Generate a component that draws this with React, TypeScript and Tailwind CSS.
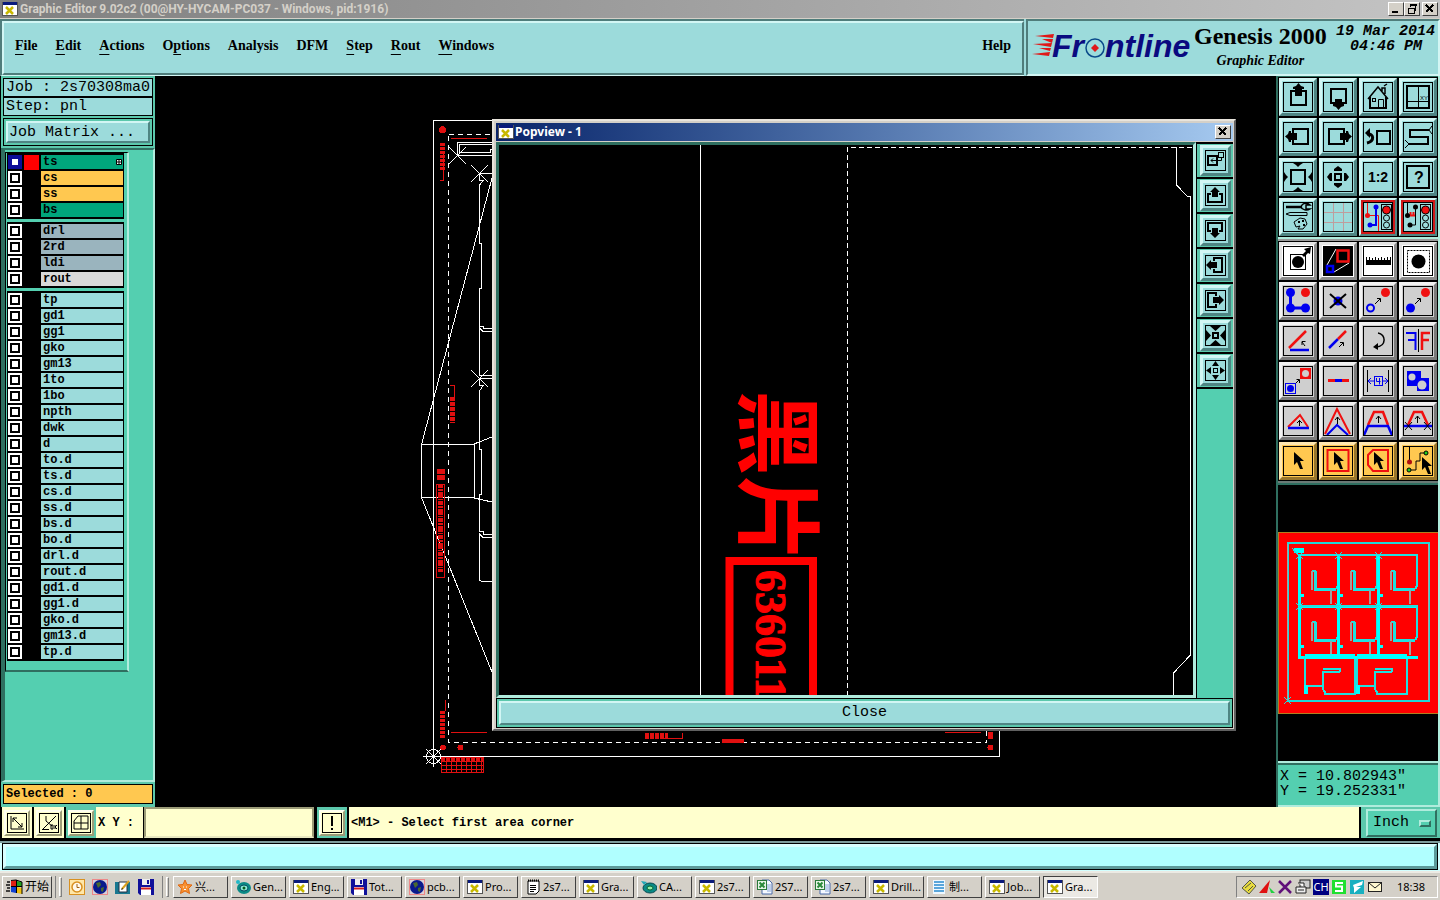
import type { ReactNode } from "react";
import clsx from "clsx";

const MONO = "font-['Liberation_Mono','DejaVu_Sans_Mono',monospace]";
const SERIF = "font-['Liberation_Serif',serif]";
const UI = "font-['Noto_Sans','Noto_Sans_CJK_SC',sans-serif]";

const raisedTeal =
  "bg-[#9cdbdb] border-t-[#d2f6f4] border-l-[#d2f6f4] border-b-[#4f8583] border-r-[#4f8583]";
const raisedGrey =
  "bg-[#cfcfcf] border-t-[#f2f2f2] border-l-[#f2f2f2] border-b-[#7b7b7b] border-r-[#7b7b7b]";
const raisedWhite =
  "bg-white border-t-[#e4e4e4] border-l-[#e4e4e4] border-b-[#8c8c8c] border-r-[#8c8c8c]";
const raisedOrange =
  "bg-[#ffc850] border-t-[#ffe7b0] border-l-[#ffe7b0] border-b-[#98762c] border-r-[#98762c]";
const raisedCream =
  "bg-[#ffffce] border-t-[#fffff0] border-l-[#fffff0] border-b-[#9c9c78] border-r-[#9c9c78]";
const raisedWin =
  "bg-[#d4d0c8] border-t-white border-l-white border-b-[#404040] border-r-[#404040]";

const menus = [
  { name: "File", key: 0 },
  { name: "Edit", key: 0 },
  { name: "Actions", key: 0 },
  { name: "Options", key: 1 },
  { name: "Analysis", key: -1 },
  { name: "DFM", key: -1 },
  { name: "Step", key: 0 },
  { name: "Rout", key: 0 },
  { name: "Windows", key: 0 },
];

const layerGroups = [
  [
    { name: "ts", tone: "bg-[#00a67c]", active: true },
    { name: "cs", tone: "bg-[#ffc850]" },
    { name: "ss", tone: "bg-[#ffc850]" },
    { name: "bs", tone: "bg-[#00a67c]" },
  ],
  [
    { name: "drl", tone: "bg-[#9ab4be]" },
    { name: "2rd", tone: "bg-[#9ab4be]" },
    { name: "ldi", tone: "bg-[#9ab4be]" },
    { name: "rout", tone: "bg-[#d9d9d9]" },
  ],
  [
    "tp", "gd1", "gg1", "gko", "gm13", "1to", "1bo", "npth", "dwk", "d", "to.d", "ts.d",
    "cs.d", "ss.d", "bs.d", "bo.d", "drl.d", "rout.d", "gd1.d", "gg1.d", "gko.d", "gm13.d", "tp.d",
  ].map((name) => ({ name, tone: "bg-[#9cdbdb]" })),
] as { name: string; tone: string; active?: boolean }[][];

/* ---------- tool icons, all on a 30x30 grid ---------- */

const cursor = "M0 0 V13 L3 10 L6 17 H9 L6 9 H10 Z";
const box = { fill: "none", stroke: "#000", strokeWidth: 2 };
const BLUE = "#0000f0";
const RED = "#f01010";

const Arrow = ({ d, color = "#000" }: { d: string; color?: string }) => (
  <path d={d} fill="none" stroke={color} strokeWidth={1} />
);

type Tool = { name: string; icon: ReactNode; framed?: boolean };

const viewTools: Tool[] = [
  {
    name: "Pan up",
    icon: (
      <>
        <rect x="8" y="9" width="15" height="14" {...box} />
        <path d="M15.5 1 L18 4 L21 5 V7 H19 V14 H12 V7 H10 V5 L13 4 Z" />
      </>
    ),
  },
  {
    name: "Pan down",
    icon: (
      <>
        <rect x="8" y="7" width="15" height="14" {...box} />
        <path d="M15.5 28 L18 25 L21 24 V22 H19 V17 H12 V22 H10 V24 L13 25 Z" />
      </>
    ),
  },
  {
    name: "Home",
    icon: (
      <g fill="none" stroke="#000">
        <path d="M5 17 L15 5 L25 17 M19 9 V6 H22 V12 M21 4 L24 2" strokeWidth="1.5" />
        <path d="M7 15 V26 H23 V15" strokeWidth="2" />
        <rect x="9.5" y="16.5" width="3" height="3" />
        <path d="M15.5 26 V17.5 H20.5 V26" />
      </g>
    ),
  },
  {
    name: "Window by coordinates",
    icon: (
      <>
        <rect x="4" y="4" width="22" height="22" {...box} />
        <path d="M15.5 4 V26 M4 19.5 H26" stroke="#000" />
        <text x="17" y="18" fontSize="6" fontFamily="Liberation Sans">XY</text>
      </>
    ),
  },
  {
    name: "Pan left",
    icon: (
      <>
        <rect x="10" y="7" width="15" height="15" {...box} />
        <path d="M2 14.5 L5 12 L6 9 H8 V11 H14 V18 H8 V20 H6 L5 17 Z" />
      </>
    ),
  },
  {
    name: "Pan right",
    icon: (
      <>
        <rect x="6" y="7" width="15" height="15" {...box} />
        <path d="M29 14.5 L26 12 L25 9 H23 V11 H17 V18 H23 V20 H25 L26 17 Z" />
      </>
    ),
  },
  {
    name: "Previous view",
    icon: (
      <>
        <rect x="14" y="9" width="13" height="13" {...box} />
        <path d="M4 12 C11 11 12 19 4 21" fill="none" stroke="#000" strokeWidth="3" />
        <path d="M2 11 L7 6 V16 Z" />
      </>
    ),
  },
  {
    name: "Snake",
    icon: (
      <>
        <path d="M26 8 H7 V15 H25 V22 H6" {...box} />
        <path d="M29 4 L26 8 L29 12 M2 18 L6 22 L2 26" fill="none" stroke="#000" />
      </>
    ),
  },
  {
    name: "Zoom out",
    icon: (
      <>
        <rect x="8" y="8" width="14" height="14" {...box} />
        <path d="M10 1 H20 L17 3 L15 5 L13 3 Z M10 29 H20 L17 27 L15 25 L13 27 Z M1 10 V20 L3 17 L5 15 L3 13 Z M29 10 V20 L27 17 L25 15 L27 13 Z" />
      </>
    ),
  },
  {
    name: "Zoom in",
    icon: (
      <>
        <rect x="12" y="12" width="6" height="6" {...box} />
        <path d="M15 4 L19 7 V9 H11 V7 Z M15 26 L19 23 V21 H11 V23 Z M4 15 L7 11 H9 V19 H7 Z M26 15 L23 11 H21 V19 H23 Z" />
      </>
    ),
  },
  {
    name: "Scale 1:2",
    icon: (
      <text x="15" y="20" fontSize="14" fontWeight="bold" textAnchor="middle" fontFamily="Liberation Sans">
        1:2
      </text>
    ),
  },
  {
    name: "Help",
    icon: (
      <>
        <rect x="4" y="4" width="22" height="22" {...box} />
        <text x="16" y="21" fontSize="16" fontWeight="bold" textAnchor="middle" fontFamily="Liberation Sans">
          ?
        </text>
      </>
    ),
  },
  {
    name: "Setup",
    icon: (
      <>
        <path d="M3 5 H19" stroke="#000" strokeWidth="2.5" />
        <path d="M27 3 C24 0 19 1 18 5 C19 8 24 9 27 7 H23 V3 Z" fill="none" stroke="#000" strokeWidth="1.5" />
        <path d="M3 12 L7 10.5 H24 V13.5 H7 Z" fill="none" stroke="#000" />
        <path d="M11 20 L17 16 L22 17 L24 22 L20 27 L15 27 L17 24 L13 25 Z" fill="none" stroke="#000" />
        <path d="M15 20 h2 M19 19 h2 M20 23 h2" stroke="#000" strokeWidth="2" />
      </>
    ),
  },
  { name: "Grid", icon: <path d="M10.5 1 V29 M20.5 1 V29 M1 10.5 H29 M1 20.5 H29" stroke="#c09c9c" /> },
  {
    name: "Online check",
    framed: true,
    icon: (
      <>
        <path d="M4.5 1 V13.5 H15.5 V29" fill="none" stroke={RED} />
        <path d="M13 5 V23 H7" fill="none" stroke={BLUE} strokeWidth="2" />
        <circle cx="13" cy="5" r="2.5" fill={BLUE} />
        <circle cx="7" cy="23" r="2.5" fill={BLUE} />
        <circle cx="4.5" cy="13.5" r="2.5" fill={RED} />
        <rect x="18.5" y="2.5" width="10" height="25" fill="none" stroke="#000" />
        <circle cx="23.5" cy="8" r="4" fill={RED} stroke="#000" />
        <circle cx="23.5" cy="16" r="3" fill="none" stroke="#000" />
        <circle cx="23.5" cy="23" r="3" fill="none" stroke="#000" />
      </>
    ),
  },
  {
    name: "Net check",
    framed: true,
    icon: (
      <>
        <path d="M4.5 1 V13.5 M12.5 5 V23 H7" fill="none" stroke="#000" />
        <path d="M5 13.5 H12 M7.5 13 V10 M10.5 13 V10" stroke={RED} strokeWidth="2" />
        <circle cx="12.5" cy="5" r="2.5" />
        <circle cx="7" cy="23" r="2.5" />
        <circle cx="4.5" cy="13.5" r="2.5" />
        <rect x="17.5" y="2.5" width="10" height="25" fill="none" stroke="#000" />
        <circle cx="22.5" cy="8" r="4" fill={RED} stroke="#000" />
        <circle cx="22.5" cy="16" r="3" fill="none" stroke="#000" />
        <circle cx="22.5" cy="23" r="3" fill="none" stroke="#000" />
      </>
    ),
  },
];

const modeTools: Tool[] = [
  {
    name: "Feature select",
    icon: (
      <>
        <rect x="7.5" y="8.5" width="15" height="15" fill="none" stroke="#000" />
        <circle cx="15" cy="16" r="6" />
        <path d="M19 9 L23 5 L21 3 L28 1 L27 8 L25 7 L21 11 Z" />
      </>
    ),
  },
  {
    name: "Popview",
    icon: (
      <>
        <rect x="1" y="1" width="28" height="28" fill="#000" />
        <path d="M4 19 L13 3 M11 26 L26 17" stroke="#fff" />
        <rect x="14.5" y="4.5" width="11" height="11" fill="none" stroke={RED} strokeWidth="2.5" />
        <rect x="4" y="20" width="6" height="6" fill="none" stroke={BLUE} strokeWidth="2.5" />
      </>
    ),
  },
  {
    name: "Measure",
    icon: (
      <>
        <rect x="3" y="14" width="25" height="5" />
        <path d="M3.5 11 V14 M6.5 11 V14 M9.5 12 V14 M12.5 11 V14 M15.5 12 V14 M18.5 11 V14 M21.5 12 V14 M24.5 11 V14 M27.5 11 V14" stroke="#000" />
      </>
    ),
  },
  {
    name: "Area select",
    icon: (
      <>
        <rect x="4.5" y="4.5" width="22" height="22" fill="none" stroke="#000" strokeDasharray="2 1" />
        <circle cx="15.5" cy="15.5" r="7" />
      </>
    ),
  },
];

const editTools: Tool[] = [
  {
    name: "Connect pads",
    icon: (
      <>
        <path d="M7.5 6.5 V22 H22" fill="none" stroke={BLUE} strokeWidth="3" />
        <circle cx="7.5" cy="6.5" r="4.5" fill={BLUE} />
        <circle cx="7.5" cy="22" r="4.5" fill={BLUE} />
        <circle cx="22.5" cy="22" r="4.5" fill={BLUE} />
        <circle cx="22.5" cy="6.5" r="4.5" fill={RED} />
      </>
    ),
  },
  {
    name: "Delete",
    icon: (
      <>
        <circle cx="15" cy="15" r="4.5" fill={BLUE} />
        <path d="M7 8 L23 22 M23 8 L7 22" stroke="#000" strokeWidth="2" />
      </>
    ),
  },
  {
    name: "Copy",
    icon: (
      <>
        <circle cx="22.5" cy="6.5" r="4.5" fill={RED} />
        <circle cx="7.5" cy="22" r="3.5" fill="none" stroke={BLUE} strokeWidth="2" />
        <Arrow d="M12 18 L17 13 M14 12.5 H17.5 V16" />
      </>
    ),
  },
  {
    name: "Move",
    icon: (
      <>
        <circle cx="22.5" cy="6.5" r="4.5" fill={RED} />
        <circle cx="7.5" cy="22" r="4.5" fill={BLUE} />
        <Arrow d="M12 18 L17 13 M14 12.5 H17.5 V16" />
      </>
    ),
  },
  {
    name: "Rotate line",
    icon: (
      <>
        <path d="M6 22 L23 5" stroke={RED} strokeWidth="2.5" />
        <path d="M7 24 H26" stroke={BLUE} strokeWidth="2.5" />
        <Arrow d="M22 20 L19 16 M19 19 V15.5 H22.5" />
      </>
    ),
  },
  {
    name: "Stretch line",
    icon: (
      <>
        <path d="M6 22 L15 13" stroke={BLUE} strokeWidth="2.5" />
        <path d="M15 13 L23 5" stroke={RED} strokeWidth="2.5" />
        <Arrow d="M16 21 L20 17 M17 16.5 H20.5 V20" />
      </>
    ),
  },
  {
    name: "Rotate",
    icon: (
      <>
        <path d="M15 7 C23 8 24 20 13 21" fill="none" stroke="#000" strokeWidth="1.5" />
        <path d="M10 21 L15 17 V24 Z" />
      </>
    ),
  },
  {
    name: "Mirror",
    icon: (
      <>
        <path d="M3 7 H12.5 V24 M5 14 H12" fill="none" stroke={BLUE} strokeWidth="2" />
        <path d="M15.5 3 V26" stroke="#000" />
        <path d="M19 24 V7 H27 M19 14 H26" fill="none" stroke={RED} strokeWidth="2.5" />
      </>
    ),
  },
  {
    name: "Change symbol",
    icon: (
      <>
        <rect x="2.5" y="17.5" width="10" height="10" fill="none" stroke={BLUE} />
        <circle cx="7.5" cy="22.5" r="3.5" fill={BLUE} />
        <rect x="17" y="2" width="11" height="11" fill={RED} />
        <circle cx="22.5" cy="7.5" r="3.5" fill="#cfcfcf" />
        <Arrow d="M13 17 L16 14 M13.5 13.5 H16.5 V17" />
      </>
    ),
  },
  {
    name: "Break line",
    icon: (
      <>
        <path d="M5 14.5 H26" stroke={RED} strokeWidth="3" />
        <path d="M12 14.5 H19" stroke={BLUE} strokeWidth="3" />
      </>
    ),
  },
  {
    name: "Spacing",
    icon: (
      <>
        <path d="M4.5 4 V26 M25.5 4 V26" stroke="#000" />
        <path d="M5 15 H11 M19 15 H25 M8 12 L5 15 L8 18 M22 12 L25 15 L22 18" fill="none" stroke={BLUE} />
        <rect x="11.5" y="10.5" width="8" height="9" fill="none" stroke={BLUE} />
        <path d="M13.5 12 V15.5 H17.5 M16.5 12 V18.5" fill="none" stroke={BLUE} />
      </>
    ),
  },
  {
    name: "Contourize",
    icon: (
      <>
        <path d="M4 5 H18 V12 H26 V25 H14 V20 H4 Z" fill={BLUE} />
        <circle cx="9" cy="11" r="3.5" fill="#cfcfcf" />
        <circle cx="19" cy="19" r="4.5" fill="#cfcfcf" />
      </>
    ),
  },
  {
    name: "Move triangle",
    icon: (
      <>
        <path d="M5 21 L17 9 L25 21" fill="none" stroke={RED} strokeWidth="2" />
        <path d="M5 22 H26" stroke={BLUE} strokeWidth="2.5" />
        <Arrow d="M16.5 20 V14 M14 17 L16.5 14.5 L19 17" />
      </>
    ),
  },
  {
    name: "Move corner",
    icon: (
      <>
        <path d="M2 28 L14 3 L27 28" fill="none" stroke={RED} strokeWidth="2" />
        <path d="M4 29 L14 19 L25 29" fill="none" stroke={BLUE} strokeWidth="2" />
        <Arrow d="M14.5 18 V11 M12 14 L14.5 11 L17 14" />
      </>
    ),
  },
  {
    name: "Move trapezoid",
    icon: (
      <>
        <path d="M5 19 L11 6 H20 L25 19" fill="none" stroke={RED} strokeWidth="2.5" />
        <path d="M1 29 L5 20 H25 L29 29" fill="none" stroke={BLUE} strokeWidth="2.5" />
        <Arrow d="M15.5 17 V10 M13 13 L15.5 10 L18 13" />
      </>
    ),
  },
  {
    name: "Move segment",
    icon: (
      <>
        <path d="M5 19 L11 6 H19 L25 19" fill="none" stroke={RED} strokeWidth="2.5" />
        <path d="M1 20 H29" stroke={BLUE} strokeWidth="2.5" />
        <Arrow d="M14.5 17 V10 M12 13 L14.5 10 L17 13 M2 16 L9 24 M9 16 L2 24 M21 16 L28 24 M28 16 L21 24" />
      </>
    ),
  },
];

const selectTools: Tool[] = [
  { name: "Select single", icon: <path d={cursor} transform="translate(11 6)" /> },
  {
    name: "Select by frame",
    icon: (
      <>
        <rect x="4.5" y="4" width="21" height="21" fill="none" stroke={RED} strokeWidth="2" />
        <path d={cursor} transform="translate(11 6)" />
      </>
    ),
  },
  {
    name: "Select by polygon",
    icon: (
      <>
        <path d="M10 4 H25 V25 H10 L5 19 V9 Z" fill="none" stroke={RED} strokeWidth="2" />
        <path d={cursor} transform="translate(11 6)" />
      </>
    ),
  },
  {
    name: "Select net",
    icon: (
      <>
        <path d="M6.5 1 V16 M6 24 H13 V15 H17 V7 H23" fill="none" stroke="#000" />
        <circle cx="6.5" cy="16" r="2.5" fill="#b01010" />
        <circle cx="6" cy="24" r="2" fill="#20d020" stroke="#000" />
        <circle cx="23" cy="7" r="2" fill="#20d020" stroke="#000" />
        <path d={cursor} transform="translate(19 11)" />
      </>
    ),
  },
];

function ToolButton({ tool, skin }: { tool: Tool; skin: string }) {
  return (
    <button
      type="button"
      aria-label={tool.name}
      className={clsx(
        "flex h-[38px] w-[38px] items-center justify-center",
        tool.framed ? "border-2" : "border-[3px]",
        skin
      )}
    >
      <span className={clsx("flex", tool.framed && "bg-[#d01818] p-[2px]")}>
        <svg width="30" height="30" viewBox="0 0 30 30" className={tool.framed ? "bg-[#9cdbdb]" : ""}>
          {tool.icon}
          <rect x="0.5" y="0.5" width="29" height="29" fill="none" stroke="#000" />
        </svg>
      </span>
    </button>
  );
}

/* ---------- popup side buttons, 21x21 grid ---------- */

const popTools: Tool[] = [
  {
    name: "Duplicate view",
    icon: (
      <g fill="none" stroke="#000">
        <rect x="3" y="6" width="9" height="9" strokeWidth="2" />
        <rect x="13.5" y="2.5" width="5" height="5" />
        <path d="M16.5 8 V10.5 H6 M8 8.5 L6 10.5 L8 12.5" />
      </g>
    ),
  },
  {
    name: "Popup pan up",
    icon: (
      <>
        <path d="M6 9 H3 V17 H17 V9 H14" {...box} />
        <path d="M10 2 L15 7 H13 V12 H7 V7 H5 Z" />
      </>
    ),
  },
  {
    name: "Popup pan down",
    icon: (
      <>
        <path d="M6 11 H3 V3 H17 V11 H14" {...box} />
        <path d="M10 18 L15 13 H13 V8 H7 V13 H5 Z" />
      </>
    ),
  },
  {
    name: "Popup pan left",
    icon: (
      <>
        <path d="M9 6 V3 H17 V17 H9 V14" {...box} />
        <path d="M1 10 L6 5 V7 H12 V13 H6 V15 Z" />
      </>
    ),
  },
  {
    name: "Popup pan right",
    icon: (
      <>
        <path d="M11 6 V3 H3 V17 H11 V14" {...box} />
        <path d="M19 10 L14 5 V7 H8 V13 H14 V15 Z" />
      </>
    ),
  },
  {
    name: "Popup zoom out",
    icon: (
      <>
        <rect x="8" y="8" width="5" height="5" {...box} />
        <path d="M5 1 H16 L10.5 6 Z M5 20 H16 L10.5 15 Z M1 5 V16 L6 10.5 Z M20 5 V16 L15 10.5 Z" />
      </>
    ),
  },
  {
    name: "Popup zoom in",
    icon: (
      <>
        <rect x="8.5" y="8.5" width="4" height="4" fill="none" stroke="#000" />
        <path d="M10.5 1 L14 6 H7 Z M10.5 20 L14 15 H7 Z M1 10.5 L6 7 V14 Z M20 10.5 L15 7 V14 Z" />
      </>
    ),
  },
];

/* ---------- small window / taskbar icons, 16x16 grid ---------- */

const XIcon = () => (
  <svg width="16" height="16" viewBox="0 0 16 16" className="shrink-0">
    <rect x="0.5" y="1.5" width="15" height="13" fill="#fff" stroke="#555" />
    <rect x="1" y="1" width="14" height="3" fill="#0a1a7c" />
    <path d="M4 6 L11 13 M11 6 L4 13" stroke="#c8b800" strokeWidth="2.5" />
  </svg>
);

const FloppyIcon = () => (
  <svg width="16" height="16" viewBox="0 0 16 16" className="shrink-0">
    <path d="M0 0 H16 V16 H2 L0 14 Z" fill="#10109a" />
    <rect x="4" y="0" width="8" height="6" fill="#eee" />
    <rect x="9" y="1" width="2" height="4" fill="#10109a" />
    <rect x="3" y="8" width="10" height="8" fill="#fff" />
    <path d="M3 9.5 H13" stroke="#d02020" strokeWidth="2" />
  </svg>
);

const GlobeIcon = () => (
  <svg width="16" height="16" viewBox="0 0 16 16" className="shrink-0">
    <rect x="0.5" y="0.5" width="15" height="15" fill="#d8d0d8" stroke="#e88" />
    <circle cx="8" cy="8" r="7" fill="#0a1a8c" />
    <path d="M4 4 L8 3 L9 6 L6 9 Z M9 9 L12 8 L11 13 L9 12 Z" fill="#4a6a30" />
  </svg>
);

const ExcelIcon = () => (
  <svg width="16" height="16" viewBox="0 0 16 16" className="shrink-0">
    <path d="M5 1 H12 L15 4 V15 H5 Z" fill="#f4f8ff" stroke="#4a6aa8" />
    <path d="M10 6 h4 M10 8 h4 M10 10 h4 M10 12 h4" stroke="#8aa8d8" />
    <rect x="0.5" y="1.5" width="9" height="9" fill="#e8f6e8" stroke="#2a7a3a" />
    <path d="M2.5 3.5 L7.5 8.5 M7.5 3.5 L2.5 8.5" stroke="#2a8a3a" strokeWidth="2" />
  </svg>
);

const GenesisIcon = () => (
  <svg width="16" height="16" viewBox="0 0 16 16" className="shrink-0">
    <ellipse cx="9" cy="9" rx="7" ry="6" fill="#0a8a86" />
    <ellipse cx="9" cy="9" rx="4" ry="3" fill="#8ef0d8" stroke="#064a60" />
    <circle cx="9" cy="9" r="1.5" fill="#0a5a20" />
    <circle cx="3" cy="3" r="2" fill="#20b8c8" />
  </svg>
);

const EyeIcon = () => (
  <svg width="16" height="16" viewBox="0 0 16 16" className="shrink-0">
    <ellipse cx="9" cy="9" rx="7" ry="5" fill="#0a8a86" stroke="#064a50" />
    <ellipse cx="9" cy="9" rx="3" ry="2" fill="#8ef0a8" stroke="#046030" />
    <path d="M0 2 L6 3 L3 6 Z" fill="#20a8b8" />
  </svg>
);

const StarIcon = () => (
  <svg width="16" height="16" viewBox="0 0 16 16" className="shrink-0">
    <path
      d="M8 1 L10 5.5 L15 6 L11.5 9.5 L12.5 14.5 L8 12 L3.5 14.5 L4.5 9.5 L1 6 L6 5.5 Z"
      fill="#f89030"
      stroke="#e06810"
    />
    <path d="M6 8 h1 M9 8 h1 M7 10.5 h2" stroke="#fff" />
  </svg>
);

const NoteIcon = () => (
  <svg width="16" height="16" viewBox="0 0 16 16" className="shrink-0">
    <path d="M3 2 H14 V12 L11 15 H3 Z" fill="#fff" stroke="#000" />
    <path d="M3 1.5 H14" stroke="#000" strokeWidth="2" strokeDasharray="1 1" />
    <path d="M5 6.5 h6 M5 8.5 h6 M5 10.5 h6 M5 12.5 h4" stroke="#000" />
  </svg>
);

const DocIcon = () => (
  <svg width="16" height="16" viewBox="0 0 16 16" className="shrink-0">
    <rect x="2" y="1" width="12" height="14" fill="#eef8ff" />
    <path d="M3 3 h10 M3 6 h10 M3 9 h10 M3 12 h10" stroke="#2a8ad0" strokeWidth="1.5" />
  </svg>
);

const ClockIcon = () => (
  <svg width="16" height="16" viewBox="0 0 16 16" className="shrink-0">
    <rect x="0.5" y="0.5" width="15" height="15" fill="#ffe7a8" stroke="#d89020" />
    <circle cx="8" cy="8" r="5" fill="#fff8e8" stroke="#d89020" strokeWidth="1.5" />
    <path d="M8 5 V8.5 H10.5" fill="none" stroke="#a06010" />
  </svg>
);

const DesktopIcon = () => (
  <svg width="16" height="16" viewBox="0 0 16 16" className="shrink-0">
    <rect x="0" y="3" width="15" height="12" fill="#187890" />
    <path d="M4 3 H12 V13 H4 Z" fill="#fff" stroke="#234" />
    <path d="M7 10 L14 2" stroke="#d8a020" strokeWidth="2" />
    <path d="M6 11 L8 10 L7 9 Z" />
  </svg>
);

const tasks: { label: string; icon: () => ReactNode; active?: boolean }[] = [
  { label: "兴...", icon: StarIcon },
  { label: "Gen...", icon: GenesisIcon },
  { label: "Eng...", icon: XIcon },
  { label: "Tot...", icon: FloppyIcon },
  { label: "pcb...", icon: GlobeIcon },
  { label: "Pro...", icon: XIcon },
  { label: "2s7...", icon: NoteIcon },
  { label: "Gra...", icon: XIcon },
  { label: "CA...", icon: EyeIcon },
  { label: "2s7...", icon: XIcon },
  { label: "2S7...", icon: ExcelIcon },
  { label: "2s7...", icon: ExcelIcon },
  { label: "Drill...", icon: XIcon },
  { label: "制...", icon: DocIcon },
  { label: "Job...", icon: XIcon },
  { label: "Gra...", icon: XIcon, active: true },
];

function WinButton({ name, children }: { name: string; children: ReactNode }) {
  return (
    <button type="button" aria-label={name} className={clsx("h-[14px] w-[16px] border", raisedWin)}>
      <svg width="14" height="12" viewBox="0 0 14 12" shapeRendering="crispEdges">
        {children}
      </svg>
    </button>
  );
}

function TitleBar() {
  return (
    <div className="flex h-[19px] shrink-0 items-center border-b border-[#d4d0c8] bg-linear-to-r from-[#808080] to-[#c4c4c4] px-[2px]">
      <XIcon />
      <h1 className="ml-[2px] font-['Roboto',sans-serif] text-[12px] leading-[16px] font-bold text-[#d4d0c8]">
        Graphic Editor 9.02c2 (00@HY-HYCAM-PC037 - Windows, pid:1916)
      </h1>
      <div className="ml-auto flex">
        <WinButton name="Minimize">
          <path d="M3 9 H9" stroke="#000" strokeWidth="2" />
        </WinButton>
        <WinButton name="Restore">
          <path d="M5 1 H11 V2 H5 Z M5 1 V4 M10.5 1 V7 H9" fill="none" stroke="#000" />
          <rect x="3" y="5" width="6" height="5" fill="none" stroke="#000" />
        </WinButton>
        <span className="w-[2px]" />
        <WinButton name="Close window">
          <path d="M3 2 L10 9 M10 2 L3 9" stroke="#000" strokeWidth="1.5" />
        </WinButton>
      </div>
    </div>
  );
}

function Logo() {
  return (
    <svg width="162" height="46" viewBox="0 -8 162 46" role="img" aria-label="Frontline" className="shrink-0 overflow-visible">
      <path d="M3 4 L22 2 L21 6 Z M10 7 L21 7 L20 11 Z M1 12 L20 11 L19 15 Z M7 16 L19 16 L18 19 Z M0 22 L18 20 L17 24 Z" fill="#e01818" />
      <g
        fill="#0a0a80"
        fontFamily="Liberation Sans"
        fontSize="32"
        fontWeight="bold"
        fontStyle="italic"
      >
        <text x="20" y="25">Fr</text>
        <text x="73" y="25">ntline</text>
      </g>
      <circle cx="63" cy="16" r="9" fill="none" stroke="#0a4a8a" strokeWidth="1.5" />
      <path d="M63 12 L67 16 L63 20 L59 16 Z" fill="#e01818" />
    </svg>
  );
}

function Header() {
  return (
    <header className={clsx(SERIF, "flex h-[57px] shrink-0 bg-[#9cdbdb] text-black")}>
      <div className="flex flex-1 border-t-2 border-b border-l-2 border-t-[#4f7d7b] border-b-[#d2f6f4] border-l-[#4f7d7b]">
        <nav className="flex flex-1 items-center gap-[18px] border-2 border-t-[#d2f6f4] border-r-[#4f7d7b] border-b-[#4f7d7b] border-l-[#d2f6f4] px-[11px] pb-[4px] text-[14px] leading-[18px] font-bold">
          {menus.map(({ name, key }) => (
            <button key={name} type="button">
              {key < 0 ? (
                name
              ) : (
                <>
                  {name.slice(0, key)}
                  <span className="underline underline-offset-4">{name[key]}</span>
                  {name.slice(key + 1)}
                </>
              )}
            </button>
          ))}
          <button type="button" className="ml-auto">
            Help
          </button>
        </nav>
      </div>
      <div className="ml-[2px] flex w-[414px] border-2 border-t-[#4f7d7b] border-r-[#d2f6f4] border-b-[#d2f6f4] border-l-[#4f7d7b] pl-[4px]">
        <div className="pt-[3px]">
          <Logo />
        </div>
        <div className="flex flex-col items-center">
          <span className="text-[24px] leading-[30px] font-bold whitespace-nowrap">Genesis 2000</span>
          <span className="text-[14px] leading-[20px] font-bold italic">Graphic Editor</span>
        </div>
        <div className={clsx(MONO, "flex-1 pt-[3px] pr-[3px] text-right text-[15px] leading-[15px] font-bold whitespace-nowrap italic")}>
          <p>19 Mar 2014</p>
          <p className="pr-[13px]">04:46 PM</p>
        </div>
      </div>
    </header>
  );
}

function LayerPanel() {
  return (
    <aside className={clsx(MONO, "flex w-[155px] shrink-0 flex-col border-l border-l-black bg-[#5cc8ac] text-black")}>
      <div className="flex flex-col gap-[2px] px-[2px] pt-[2px] pb-[2px]">
        <div className="border border-black bg-[#9cdbdb] text-[15px] whitespace-nowrap">
          <p className="h-[19px] border-b-2 border-black pl-[2px] leading-[17px]">Job : 2s70308ma0</p>
          <p className="h-[17px] pl-[2px] leading-[17px]">Step: pnl</p>
        </div>
        <div className="border border-black p-[2px]">
          <button
            type="button"
            className={clsx("block h-[22px] w-full border-2 text-left text-[15px] leading-[17px]", raisedTeal)}
          >
            <span className="pl-px">Job Matrix ...</span>
          </button>
        </div>
      </div>
      <div className="min-h-0 flex-1 border-t-2 border-r-2 border-b-2 border-l-4 border-t-[#2f6f60] border-r-[#b0ecdd] border-b-[#b0ecdd] border-l-[#2f6f60] bg-[#54cfb0] pt-[2px]">
        <div className="flex w-[124px] border-t border-r-2 border-b-2 border-l border-t-black border-r-[#b0ecdd] border-b-[#2f6f60] border-l-black pb-[9px]">
          <div className="flex flex-1 flex-col gap-[3px] pr-[3px] pl-px">
            {layerGroups.map((group, g) => (
              <ul key={g} className="border-t border-black bg-black pb-px">
                {group.map((layer) => (
                  <li key={layer.name}>
                    <label className="flex h-[16px] items-center gap-[2px] px-px text-[12px] leading-[14px] font-bold">
                      <input
                        type="checkbox"
                        defaultChecked={layer.active}
                        className={clsx(
                          "size-[14px] shrink-0 appearance-none bg-white",
                          layer.active
                            ? "border-4 border-[#0c0c98]"
                            : "border-2 border-white shadow-[inset_0_0_0_2px_#000]"
                        )}
                      />
                      <span className={clsx("size-[15px] shrink-0", layer.active && "bg-[#ff0000]")} />
                      <span className={clsx("flex h-[14px] flex-1 items-center justify-between pl-[2px]", layer.tone)}>
                        {layer.name}
                        {layer.active && (
                          <svg width="6" height="6" viewBox="0 0 6 6" className="mr-px">
                            <path d="M0.5 0.5 H5.5 V5.5 H0.5 Z M3 0 V6 M0 3 H6" fill="#fff" stroke="#000" />
                          </svg>
                        )}
                      </span>
                    </label>
                  </li>
                ))}
              </ul>
            ))}
          </div>
        </div>
      </div>
      <div className="px-[2px] pt-[2px] pb-[3px]">
        <p className="h-[20px] border border-black bg-[#ffc850] pl-[2px] text-[12px] leading-[18px] font-bold">
          Selected : 0
        </p>
      </div>
    </aside>
  );
}

/* Panel outline behind the popup */
function PanelDrawing() {
  return (
    <svg className="absolute inset-0 h-full w-full" shapeRendering="crispEdges">
      <g transform="translate(-155 -76)" fill="none" stroke="#fff">
        <rect x="433.5" y="120.5" width="566" height="636" />
        <rect x="448.5" y="134.5" width="538" height="608" strokeDasharray="5 4" />
        <path d="M492 178 L421.5 444.5 V497.5 L492 672 M421.5 444.5 H474.5 V497.5 H421.5 M474 444 L492 437 M474 498 L492 502" />
        <path d="M500 142.5 H457.5 V155.5 H500 M500 144.5 H459.5 V152.5 H490 V149 H500" />
        <path d="M449 147 L466 164 M466 147 L449 164" />
        <path d="M471 165 L488 182 M488 165 L471 182 M471 370 L488 387 M488 370 L471 387" />
        <path d="M500 173.5 H479.5 V180 H483.5 L479.5 185 V243 H481.5 V288 H479.5 V326 H483.5 V328.5 H500 M500 331.5 H483 L479.5 328 V375.5 H500 M500 378.5 H479.5 V385 H483.5 L479.5 391 V449 H481.5 V494 H479.5 V531 H483.5 V534.5 H500 M500 537.5 H483 L479.5 534 V580 L482 581.5 H500" />
        <circle cx="433.5" cy="756.5" r="7" />
        <path d="M423 756.5 H444 M433.5 746 V767 M426 749 L441 764 M441 749 L426 764" />
        <g stroke="#e01010">
          <path d="M451 138.5 H487 M451 732.5 H487 M945 732.5 H981" />
          <path d="M443.5 154 V180.5 H440 M445.5 700 V711 M450 385.5 H454.5 V397 M663 738.5 H682.5 V733" />
          <path d="M442.5 143 V170 M442.5 711 V738" strokeWidth="5" strokeDasharray="3 1" />
          <path d="M452.5 397 V423" strokeWidth="5" strokeDasharray="4 1" />
          <path d="M441 469 V480" strokeWidth="8" strokeDasharray="5 1" />
          <path d="M440.5 484 V572" strokeWidth="5" strokeDasharray="4 1 2 1 6 1 1 1" />
          <rect x="436.5" y="484.5" width="8" height="93" />
          <path d="M645 736 H668" strokeWidth="6" strokeDasharray="4 1" />
          <path d="M722 740.5 H744" strokeWidth="4" />
          <path d="M990 732 V739" strokeWidth="5" />
          <path d="M441.5 757.5 H483 V772 H441.5 Z M441 761.5 H483 M441 765.5 H483 M441 769.5 H483" />
          <path d="M441 760 H483" strokeWidth="4" strokeDasharray="4 1" />
          <path d="M441 765 H483" strokeWidth="15" strokeDasharray="1 4" />
        </g>
        <g fill="#e01010" stroke="none">
          <circle cx="442.5" cy="129.5" r="3.5" />
          <circle cx="443" cy="747.5" r="3" />
          <circle cx="460.5" cy="747.5" r="3" />
          <circle cx="990.5" cy="747.5" r="3" />
        </g>
      </g>
    </svg>
  );
}

function PopDrawing() {
  return (
    <svg className="block h-full w-full" role="img" aria-label="Zoomed artwork">
      <g fill="none" stroke="#fff" shapeRendering="crispEdges">
        <path d="M201.5 0 V551" />
        <path d="M348.5 551 V2.5 H694" strokeDasharray="5 3" />
        <path d="M677.5 2 V40 L688 51 H691.5 V510 L674.5 528 V551" />
      </g>
      <path d="M230.5 551 V416 H314 V551" fill="none" stroke="#ff0000" strokeWidth="8" />
      <g fill="#ff0000" fontWeight="bold">
        <text transform="translate(247 245) rotate(90)" fontSize="86" fontFamily="Noto Sans CJK SC">
          黑片
        </text>
        <text
          transform="translate(257 425) rotate(90)"
          fontSize="44"
          fontFamily="Liberation Serif"
          stroke="#ff0000"
        >
          636011
        </text>
      </g>
    </svg>
  );
}

function Popview() {
  return (
    <section
      aria-label="Popview - 1"
      className="absolute top-[43px] left-[337px] flex h-[612px] w-[744px] flex-col border-2 border-t-[#e8e4dc] border-r-[#606060] border-b-[#606060] border-l-[#e8e4dc] bg-[#d4d0c8] pt-[2px] pr-px pb-px pl-[2px]"
    >
      <div className="flex h-[18px] shrink-0 items-center bg-linear-to-r from-[#0a246a] to-[#a6caf0] pr-[2px] pl-[2px]">
        <XIcon />
        <h2 className={clsx(UI, "ml-px text-[12px] leading-[16px] font-bold text-white")}>Popview - 1</h2>
        <div className="ml-auto flex">
          <WinButton name="Close popview">
            <path d="M3 2 L10 9 M10 2 L3 9" stroke="#000" strokeWidth="1.5" />
          </WinButton>
        </div>
      </div>
      <div className="mt-px flex min-h-0 flex-1">
        <div className="min-w-0 flex-1 border-[3px] border-t-[#2f6f60] border-r-[#b0ecdd] border-b-[#b0ecdd] border-l-[#2f6f60] bg-black">
          <PopDrawing />
        </div>
        <div className="flex w-[37px] flex-col border-t-2 border-l border-black bg-[#54cfb0]">
          {popTools.map((t) => (
            <div key={t.name} className="h-[35px] border-b-2 border-black bg-[#5cc8ac] px-[2px] pt-px">
              <button
                type="button"
                aria-label={t.name}
                className={clsx("mx-auto flex size-[31px] items-center justify-center border-[3px]", raisedTeal)}
              >
                <svg width="21" height="21" viewBox="0 0 21 21">
                  {t.icon}
                  <rect x="0.5" y="0.5" width="20" height="20" fill="none" stroke="#000" />
                </svg>
              </button>
            </div>
          ))}
        </div>
      </div>
      <div className="shrink-0 border border-black bg-[#5cc8ac] p-[2px]">
        <button
          type="button"
          className={clsx(MONO, "block h-[24px] w-full border-2 text-center text-[15px] leading-[20px]", raisedTeal)}
        >
          Close
        </button>
      </div>
    </section>
  );
}

const miniCells = [
  [21, 23], [60, 23], [100, 23],
  [21, 74], [60, 74], [100, 74],
];

function MiniMap() {
  return (
    <svg width="160" height="182" viewBox="0 0 160 182" role="img" aria-label="Panel overview" className="block">
      <rect width="160" height="182" fill="#ff0000" />
      <path d="M0 0.5 H160 M0.5 0 V182 M0 181.5 H160" stroke="#b08020" />
      <g fill="none" shapeRendering="crispEdges">
        <rect x="10" y="11" width="141" height="158" stroke="#20d8d8" strokeWidth="2" />
        <path d="M9 12 V168 M150 12 V168" stroke="#a0a8a8" />
        {miniCells.map(([x, y]) => (
          <g key={`${x}-${y}`} transform={`translate(${x} ${y})`}>
            <path d="M0 0 H39 V31 L37 34" stroke="#20e0e0" strokeWidth="2" />
            <path d="M13 16 H17" stroke="#20e0e0" strokeWidth="2" />
            <path d="M16 16 V34 H37" stroke="#20e0e0" strokeWidth="3" />
            <path d="M13 16 V35 M32 35 V49 M1 18 V32" stroke="#a0a0a0" strokeWidth="2" />
            <path d="M0 0 V51 H39 M0 40 H5" stroke="#00ffff" strokeWidth="3" />
            <path d="M-3 -3 L4 4 M4 -3 L-3 4" stroke="#20e0e0" />
          </g>
        ))}
        {[27, 79].map((x) => (
          <g key={x} transform={`translate(${x} 124)`}>
            <path d="M0 0 V38 M19 38 H50 V0 M0 30 H17" stroke="#20e0e0" strokeWidth="2" />
            <path d="M35 16 H18 V33 L21 38 M18 13 H35 V16" stroke="#20e0e0" strokeWidth="2" />
            <path d="M1 29 V38 M0 0 H50" stroke="#00ffff" strokeWidth="4" />
          </g>
        ))}
        <path d="M27 125 H140" stroke="#00ffff" strokeWidth="3" />
        <path d="M16 16 H25 V20 H16 Z" fill="#00ffff" stroke="#00ffff" />
        <path d="M6 165 L13 172 M13 165 L6 172 M14 16 L20 23" stroke="#20e0e0" />
      </g>
    </svg>
  );
}

function ToolPanel() {
  return (
    <aside className="flex w-[164px] shrink-0 flex-col border-r-2 border-l-2 border-r-[#b0ecdd] border-l-[#2f6f60] bg-black">
      <div className="grid grid-cols-4 gap-[2px] border-t border-b-2 border-t-[#2f6f60] border-b-[#b0ecdd] p-px">
        {viewTools.map((t) => (
          <ToolButton key={t.name} tool={t} skin={raisedTeal} />
        ))}
      </div>
      <div className="grid grid-cols-4 gap-[2px] border-y-2 border-t-[#9a9a9a] border-b-[#6a7a76] p-px">
        {modeTools.map((t) => (
          <ToolButton key={t.name} tool={t} skin={raisedWhite} />
        ))}
        {editTools.map((t) => (
          <ToolButton key={t.name} tool={t} skin={raisedGrey} />
        ))}
        {selectTools.map((t) => (
          <ToolButton key={t.name} tool={t} skin={raisedOrange} />
        ))}
      </div>
      <div className="flex min-h-0 flex-1 flex-col justify-center border-t-2 border-b-2 border-t-[#2f6f60] border-b-[#b0ecdd]">
        <MiniMap />
      </div>
      <div className={clsx(MONO, "h-[44px] shrink-0 border-t-2 border-b-2 border-t-[#2f6f60] border-b-[#b0ecdd] bg-[#54cfb0] pt-[4px] pl-[2px] text-[15px] leading-[15px] whitespace-pre")}>
        <p>X = 10.802943"</p>
        <p>Y = 19.252331"</p>
      </div>
    </aside>
  );
}

function PromptIcon({ name, green, children }: { name: string; green?: boolean; children: ReactNode }) {
  return (
    <div className={clsx("mr-[2px] flex h-[31px] w-[30px] items-center justify-center", green ? "bg-[#5cc8ac]" : "bg-[#ffffce]")}>
      <button
        type="button"
        aria-label={name}
        className={clsx("flex size-[26px] items-center justify-center border-2", raisedCream)}
      >
        <svg width="20" height="20" viewBox="0 0 20 20" fill="none" stroke="#000">
          <rect x="0.5" y="0.5" width="19" height="19" />
          {children}
        </svg>
      </button>
    </div>
  );
}

function PromptBar() {
  return (
    <div className={clsx(MONO, "flex h-[34px] shrink-0 items-start bg-black pl-[2px] text-[12px] font-bold text-black")}>
      <PromptIcon name="Relative">
        <path d="M4 3 V16 H17 M6 5 L15 14 M6 9 V5 H10 M11 14 H15 V10" />
      </PromptIcon>
      <PromptIcon name="Angle">
        <path d="M3 17 L17 3 M3 16.5 H10 M7 3 V8 M7 8 L13 13 M12 12 h2 v4 h-2 z M16 12 v4 M18 12 l-2 2 l2 2" />
      </PromptIcon>
      <div className="-mr-[2px] flex">
        <PromptIcon name="Snap grid" green>
          <path d="M7 3 H17 V16 H3 V8 Z M10 3 V16 M3 10 H17" />
        </PromptIcon>
      </div>
      <label htmlFor="xy" className="h-[31px] w-[47px] bg-[#ffffce] pl-[2px] leading-[32px]">
        X Y :
      </label>
      <input
        id="xy"
        type="text"
        className="ml-px h-[31px] w-[170px] border-2 border-t-[#9c9c78] border-r-[#9c9c78] border-b-[#e8e8c0] border-l-[#9c9c78] bg-[#ffffce] px-1"
      />
      <div className="ml-[3px] flex">
        <PromptIcon name="Message" green>
          <path d="M10 3 V13 M10 15 V17" strokeWidth="2" />
        </PromptIcon>
      </div>
      <output className="h-[31px] min-w-0 flex-1 truncate bg-[#ffffce] pl-[2px] leading-[32px]">
        {"<M1> - Select first area corner"}
      </output>
      <div className="ml-[2px] h-[31px] w-[79px] bg-[#5cc8ac] px-[5px] pt-[2px] pr-[3px]">
        <div className="relative">
          <select
            aria-label="Units"
            className="h-[28px] w-full appearance-none border-2 border-t-[#b0ecdd] border-r-[#2f6f60] border-b-[#2f6f60] border-l-[#b0ecdd] bg-[#54cfb0] pl-[5px] text-[15px] font-normal"
          >
            <option>Inch</option>
            <option>MM</option>
          </select>
          <span className="pointer-events-none absolute top-[11px] right-[6px] h-[7px] w-[12px] border-2 border-t-[#b0ecdd] border-r-[#2f6f60] border-b-[#2f6f60] border-l-[#b0ecdd]" />
        </div>
      </div>
    </div>
  );
}

function Separator() {
  return <span className="h-[20px] w-[3px] border border-t-white border-r-[#808080] border-b-[#808080] border-l-white" />;
}

function Taskbar() {
  return (
    <footer className={clsx(UI, "flex h-[29px] shrink-0 items-center border-t-2 border-[#eceae4] bg-[#d4d0c8] px-[2px] text-[11px] leading-[16px] text-black")}>
      <button type="button" className={clsx("flex h-[22px] w-[50px] shrink-0 items-center gap-[2px] border pl-[3px]", raisedWin)}>
        <svg width="17" height="16" viewBox="0 0 17 16" className="shrink-0">
          <path d="M5 2 L10 1 V7 H5 Z" fill="#e02010" />
          <path d="M11 2 L16 3 V8 L11 7 Z" fill="#20a020" />
          <path d="M5 8 H10 V14 L5 13 Z" fill="#1040d0" />
          <path d="M11 8 L16 9 V15 L11 14 Z" fill="#f0c010" />
          <path d="M1 3 h3 M0 6 h4 M1 9 h3 M0 12 h4" stroke="#101010" strokeWidth="1.5" />
          <path d="M5 1.5 L10 1 L16 3 V15 M10.5 1 V14 M5 7.5 H16" fill="none" stroke="#000" />
        </svg>
        <span className="text-[12px]">开始</span>
      </button>
      <span className="w-[3px]" />
      <div className="flex items-center gap-[3px]">
        <span className="h-[22px] w-px bg-[#808080]" />
        <Separator />
      </div>
      <div className="flex gap-[7px] pr-[8px] pl-[7px]">
        {[ClockIcon, GlobeIcon, DesktopIcon, FloppyIcon].map((Icon, i) => (
          <button key={i} type="button" aria-label={["Clock", "Browser", "Show desktop", "Commander"][i]}>
            <Icon />
          </button>
        ))}
      </div>
      <div className="flex items-center gap-[3px] pr-[4px]">
        <span className="h-[22px] w-px bg-[#808080]" />
        <Separator />
      </div>
      <div className="flex min-w-0 flex-1 gap-[3px]">
        {tasks.map((t, i) => (
          <button
            key={i}
            type="button"
            className={clsx(
              "flex h-[22px] w-[55px] shrink-0 items-center gap-[2px] overflow-hidden border pl-[3px] whitespace-nowrap",
              t.active
                ? "border-t-[#404040] border-r-white border-b-white border-l-[#404040] bg-[#ebe9e4]"
                : raisedWin
            )}
          >
            <t.icon />
            {t.label}
          </button>
        ))}
      </div>
      <div className="flex h-[22px] w-[202px] shrink-0 items-center gap-[2px] border border-t-[#808080] border-r-white border-b-white border-l-[#808080] pr-[12px] pl-[4px]">
        <svg width="16" height="16" viewBox="0 0 16 16">
          <path d="M1 9 L9 1 L15 7 L8 15 Z" fill="#e8dc40" stroke="#554" />
          <path d="M4 9 L10 4 M7 12 L12 7" stroke="#554" />
        </svg>
        <svg width="16" height="16" viewBox="0 0 16 16">
          <path d="M0 14 L11 1 L8 14 Z" fill="#e01010" />
          <path d="M10 8 L16 14 H12 Z" fill="#20d040" />
        </svg>
        <svg width="16" height="16" viewBox="0 0 16 16">
          <path d="M2 2 L14 14 M14 2 L2 14" stroke="#60107a" strokeWidth="2.5" />
        </svg>
        <svg width="16" height="16" viewBox="0 0 16 16">
          <rect x="5" y="1" width="10" height="8" fill="#ccc" stroke="#222" />
          <path d="M1 8 H11 V14 H1 Z" fill="#eee" stroke="#222" />
          <path d="M3 4 H9 V8 M3 11 H9" stroke="#222" fill="#fff" />
        </svg>
        <span className="flex h-[16px] w-[16px] items-center justify-center bg-[#000080] text-white">CH</span>
        <svg width="16" height="16" viewBox="0 0 16 16">
          <rect x="1" y="1" width="14" height="14" fill="#20e030" />
          <path d="M12 4 H5 V7.5 H11 V12 H4" fill="none" stroke="#fff" strokeWidth="2" />
        </svg>
        <svg width="16" height="16" viewBox="0 0 16 16">
          <rect x="1" y="1" width="14" height="14" fill="#18b0c0" />
          <path d="M4 6 L14 2 L13 6 L7 8 H12 L5 14 V9 Z" fill="#fff" />
        </svg>
        <svg width="16" height="16" viewBox="0 0 16 16">
          <rect x="1.5" y="3.5" width="13" height="9" fill="#fff8d0" stroke="#222" />
          <path d="M2 4 L8 9 L14 4" fill="none" stroke="#222" />
        </svg>
        <time className="ml-auto">18:38</time>
      </div>
    </footer>
  );
}

export default function App() {
  return (
    <div className="flex h-screen flex-col overflow-hidden bg-black">
      <TitleBar />
      <Header />
      <div className="flex min-h-0 flex-1">
        <LayerPanel />
        <main className="relative min-w-0 flex-1 overflow-hidden bg-black">
          <PanelDrawing />
          <Popview />
        </main>
        <ToolPanel />
      </div>
      <PromptBar />
      <div className="h-[30px] shrink-0 border-t-2 border-t-[#7d9c9c] bg-[#d2ffff] px-[2px] pb-px">
        <div className="h-full border border-black bg-[#d2ffff]">
          <div className="h-full border-[3px] border-t-[#d8ffff] border-r-[#5c9a9a] border-b-[#5c9a9a] border-l-[#d8ffff] bg-[#b0ffff]" />
        </div>
      </div>
      <Taskbar />
    </div>
  );
}
